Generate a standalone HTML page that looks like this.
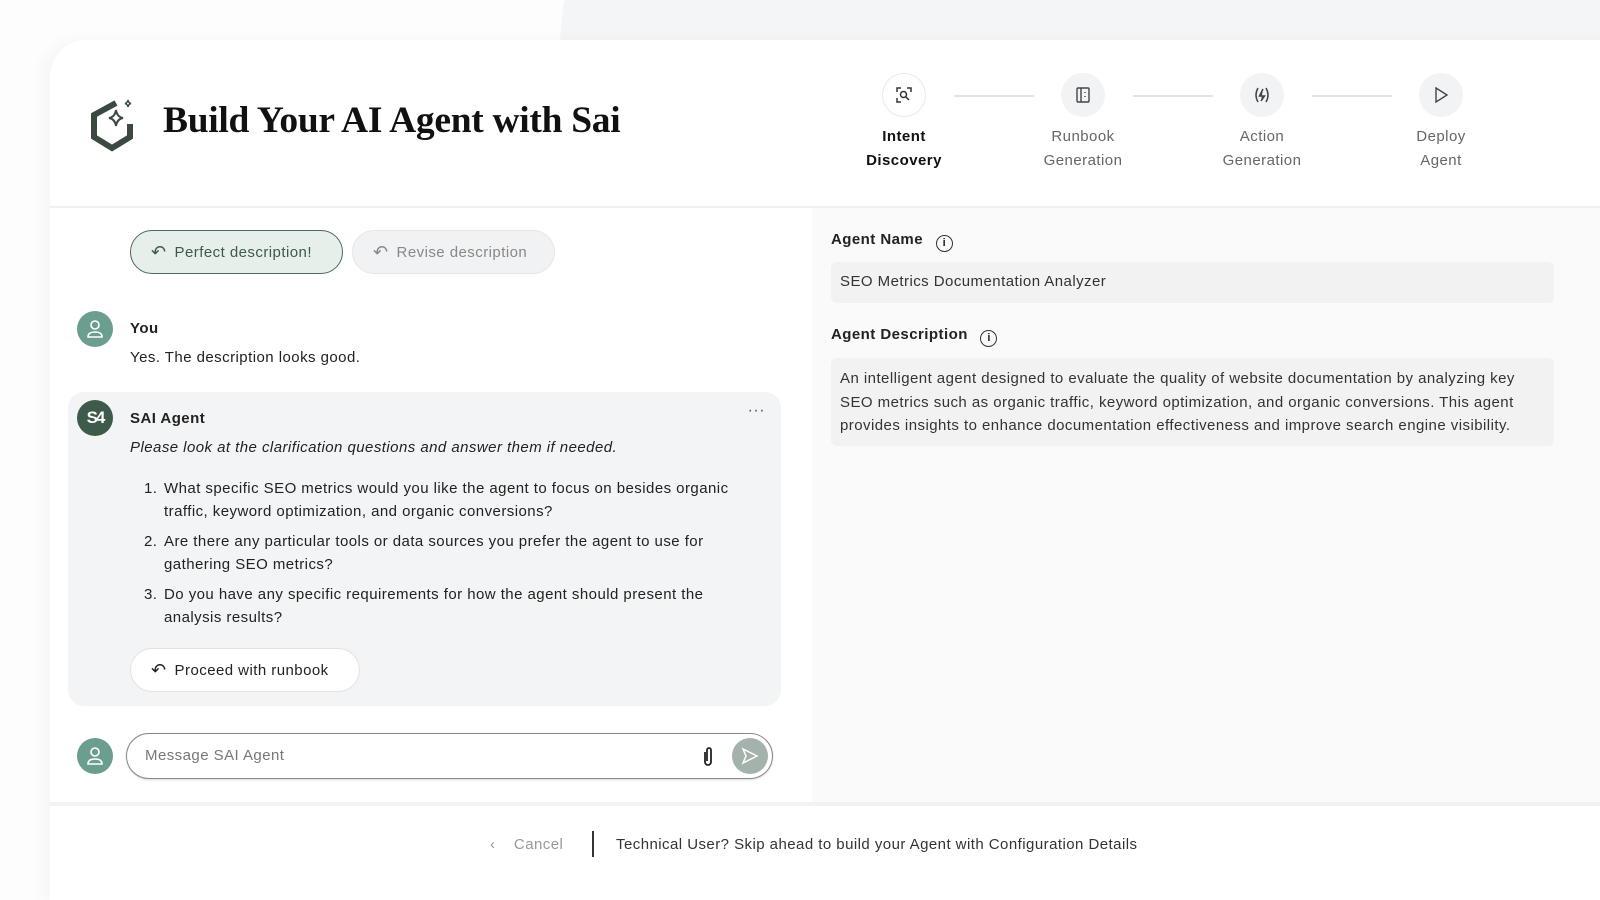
<!DOCTYPE html>
<html><head><meta charset="utf-8">
<style>
*{box-sizing:border-box;margin:0;padding:0}
body{width:1600px;height:874px;overflow:hidden;background:#fdfdfd;font-family:"Liberation Sans",sans-serif;color:#1f1f1f;position:relative;letter-spacing:0.45px}
.blob{position:absolute;left:560px;top:-400px;width:1400px;height:900px;border-radius:50%;background:#f4f5f7}
.card{position:absolute;left:50px;top:40px;width:1600px;height:860px;background:#fff;border-radius:36px 36px 0 0;box-shadow:-8px 0 16px rgba(0,0,0,0.03)}
.abs{position:absolute}
.title{left:113px;top:59px;font-family:"Liberation Serif",serif;font-weight:bold;font-size:37.5px;color:#111;letter-spacing:-0.3px}
.hline{left:0;top:166px;width:1600px;height:2px;background:#f0f0f0}
.step{position:absolute;top:33px;width:120px;text-align:center;font-size:15px;line-height:24px;color:#666}
.step .c{width:44px;height:44px;border-radius:50%;background:#f2f3f4;margin:0 auto 8px;display:flex;align-items:center;justify-content:center}
.conn{position:absolute;top:55px;width:80px;height:2px;background:#e3e3e3}
.right{left:762px;top:168px;width:840px;height:594px;background:#fafafa}
.lbl{font-weight:bold;font-size:15px;color:#222}
.field{background:#f2f2f3;border-radius:6px;font-size:15px;color:#333}
.pill{position:absolute;height:44px;border-radius:22px;display:flex;align-items:center;padding-left:20px;font-size:15px;gap:8px}
.av{position:absolute;width:36px;height:36px;border-radius:50%;background:#6b9e8e;display:flex;align-items:center;justify-content:center}
.msg{font-size:15px;color:#222}
ol{padding-left:32px}
ol li{margin-bottom:8px;line-height:22.5px;padding-left:2px}
.foot{left:0;top:762px;width:1600px;height:4px;background:#f2f2f2}
</style></head><body>
<div class="blob"></div>
<div class="card">
 <svg class="abs" style="left:36px;top:56px" width="52" height="56" viewBox="0 0 52 56">
  <path d="M30 7 L8 19 V41 L26 52 L44 41 V28" fill="none" stroke="#3b4a40" stroke-width="6"/>
  <path d="M30 14 Q31 21 37 22 Q31 23 30 30 Q29 23 23 22 Q29 21 30 14Z" fill="none" stroke="#3b4a40" stroke-width="2"/>
  <path d="M42 4 Q42.5 7 45 7.5 Q42.5 8 42 11 Q41.5 8 39 7.5 Q41.5 7 42 4Z" fill="none" stroke="#3b4a40" stroke-width="1.5"/>
 </svg>
 <div class="abs title">Build Your AI Agent with Sai</div>

 <div class="step" style="left:794px;color:#111;font-weight:bold"><div class="c" style="background:#fff;border:1.5px solid #e6ecea"><svg width="18" height="18" viewBox="0 0 18 18" fill="none" stroke="#333" stroke-width="1.5"><path d="M2 6V2h4M12 2h4v4M2 12v4h4"/><circle cx="8.5" cy="8.5" r="3"/><path d="M11 11l3 3"/></svg></div>Intent<br>Discovery</div>
 <div class="conn" style="left:904px"></div>
 <div class="step" style="left:973px"><div class="c"><svg width="16" height="18" viewBox="0 0 16 18" fill="none" stroke="#444" stroke-width="1.4"><rect x="2" y="2" width="12" height="14" rx="1"/><path d="M6 2v14M10 6v1M10 10v1"/></svg></div>Runbook<br>Generation</div>
 <div class="conn" style="left:1083px"></div>
 <div class="step" style="left:1152px"><div class="c"><svg width="20" height="20" viewBox="0 0 20 20" fill="none" stroke="#444" stroke-width="1.5"><path d="M6 3Q2 10 6 17M14 3Q18 10 14 17"/><path d="M11 4L7.5 11h5L9 16" fill="#444"/></svg></div>Action<br>Generation</div>
 <div class="conn" style="left:1262px"></div>
 <div class="step" style="left:1331px"><div class="c"><svg width="18" height="18" viewBox="0 0 18 18" fill="none" stroke="#444" stroke-width="1.4"><path d="M4 2L15 9L4 16Z"/></svg></div>Deploy<br>Agent</div>

 <div class="abs hline"></div>
 <div class="abs right">
  <div class="abs lbl" style="left:19px;top:23px">Agent Name <span style="display:inline-block;width:17px;height:17px;border:1.4px solid #333;border-radius:50%;font-size:11px;text-align:center;line-height:14px;margin-left:8px;vertical-align:-2px;letter-spacing:0">i</span></div>
  <div class="abs field" style="left:19px;top:54px;width:723px;height:41px;padding:11px 9px">SEO Metrics Documentation Analyzer</div>
  <div class="abs lbl" style="left:19px;top:118px">Agent Description <span style="display:inline-block;width:17px;height:17px;border:1.4px solid #333;border-radius:50%;font-size:11px;text-align:center;line-height:14px;margin-left:8px;vertical-align:-2px;letter-spacing:0">i</span></div>
  <div class="abs field" style="left:19px;top:150px;width:723px;height:88px;padding:9px 9px;line-height:23.5px">An intelligent agent designed to evaluate the quality of website documentation by analyzing key SEO metrics such as organic traffic, keyword optimization, and organic conversions. This agent provides insights to enhance documentation effectiveness and improve search engine visibility.</div>
 </div>

 <div class="pill" style="left:80px;top:190px;width:213px;background:#e6efea;border:1.5px solid #4d6a5c;color:#3d5a4c"><span style="font-size:18px">↶</span>Perfect description!</div>
 <div class="pill" style="left:302px;top:190px;width:203px;background:#f1f2f3;border:1.5px solid #e6e6e6;color:#888"><span style="font-size:18px">↶</span>Revise description</div>

 <div class="av" style="left:27px;top:271px"><svg width="18" height="20" viewBox="0 0 18 20" fill="none" stroke="#fff" stroke-width="1.6"><circle cx="9" cy="6" r="4"/><path d="M2 18c0-4 3-5 7-5s7 1 7 5z"/></svg></div>
 <div class="abs msg" style="left:80px;top:280px;font-weight:bold">You</div>
 <div class="abs msg" style="left:80px;top:309px">Yes. The description looks good.</div>

 <div class="abs" style="left:18px;top:352px;width:713px;height:314px;background:#f3f4f5;border-radius:16px">
  <div class="av" style="left:9px;top:8px;background:#3e5a4a;color:#fff;font-weight:bold;font-size:17px;letter-spacing:-2px">S4</div>
  <div class="abs msg" style="left:62px;top:18px;font-weight:bold">SAI Agent</div>
  <div class="abs" style="right:16px;top:10px;color:#555">···</div>
  <div class="abs msg" style="left:62px;top:47px;font-style:italic">Please look at the clarification questions and answer them if needed.</div>
  <ol class="abs msg" style="left:62px;top:86px;width:630px">
   <li>What specific SEO metrics would you like the agent to focus on besides organic traffic, keyword optimization, and organic conversions?</li>
   <li>Are there any particular tools or data sources you prefer the agent to use for gathering SEO metrics?</li>
   <li>Do you have any specific requirements for how the agent should present the analysis results?</li>
  </ol>
  <div class="pill" style="left:62px;top:256px;width:230px;background:#fff;border:1px solid #e2e2e2;color:#222"><span style="font-size:18px">↶</span>Proceed with runbook</div>
 </div>

 <div class="av" style="left:27px;top:698px"><svg width="18" height="20" viewBox="0 0 18 20" fill="none" stroke="#fff" stroke-width="1.6"><circle cx="9" cy="6" r="4"/><path d="M2 18c0-4 3-5 7-5s7 1 7 5z"/></svg></div>
 <div class="abs" style="left:76px;top:693px;width:647px;height:46px;border:1.5px solid #888;border-radius:23px;background:#fff;box-shadow:0 1px 2px rgba(0,0,0,.15)">
  <div class="abs" style="left:18px;top:13px;font-size:15px;color:#777">Message SAI Agent</div>
  <svg class="abs" style="left:574px;top:12px" width="14" height="22" viewBox="0 0 14 22" fill="none" stroke="#222" stroke-width="1.8"><path d="M4 6v10a3 3 0 0 0 6 0V4a2 2 0 0 0-4 0v11"/></svg>
  <div class="abs" style="left:605px;top:4px;width:36px;height:36px;border-radius:50%;background:#a3b3ab;display:flex;align-items:center;justify-content:center"><svg width="18" height="18" viewBox="0 0 18 18" fill="none" stroke="#fff" stroke-width="1.5"><path d="M2 2L16 9L2 16L5 9Z"/></svg></div>
 </div>

 <div class="abs foot"></div>
 <div class="abs" style="left:440px;top:796px;font-size:15px;color:#999">‹ &nbsp;&nbsp;&nbsp;Cancel</div>
 <div class="abs" style="left:542px;top:791px;width:1.5px;height:26px;background:#333"></div>
 <div class="abs" style="left:566px;top:796px;font-size:15px;color:#333">Technical User? Skip ahead to build your Agent with Configuration Details</div>
</div>
</body></html>
